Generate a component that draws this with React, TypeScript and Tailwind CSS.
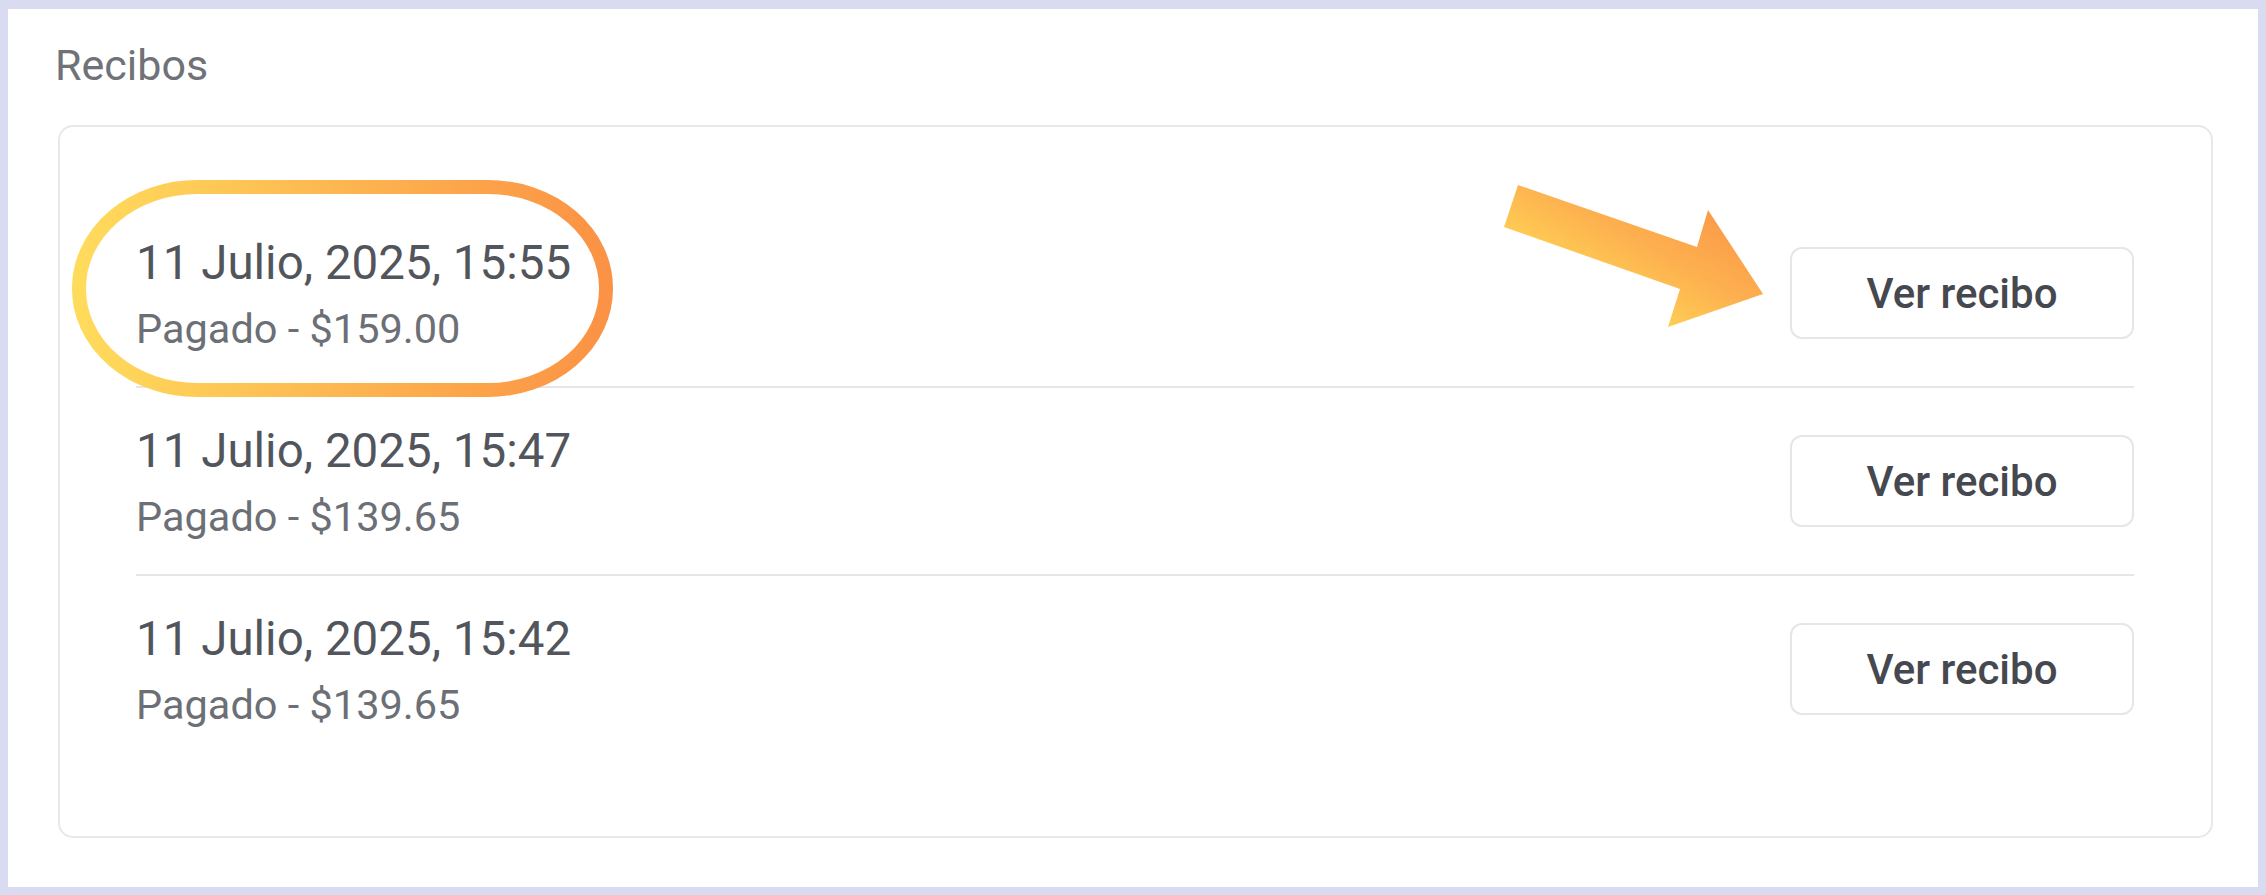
import React from "react";

const rows = [
  { date: "11 Julio, 2025, 15:55", amount: "Pagado - $159.00" },
  { date: "11 Julio, 2025, 15:47", amount: "Pagado - $139.65" },
  { date: "11 Julio, 2025, 15:42", amount: "Pagado - $139.65" },
];

export default function App() {
  return (
    <div
      className="relative w-[2266px] h-[895px] bg-[#d9dcf0] pt-[9px] px-[8px] pb-[8px]"
      style={{ fontFamily: "Roboto, 'Noto Sans', sans-serif" }}
    >
      <div className="h-full bg-white pl-[50px] pr-[45px] pt-[31px]">
        <div className="ml-[-3px] text-[43px] leading-[50px] text-[#707278]">Recibos</div>
        <div className="mt-[35px] border-2 border-[#e8e8eb] rounded-[15px] pt-[73px] pb-[74px] pl-[76px] pr-[77px]">
          {rows.map((r, i) => (
            <div
              key={i}
              className={
                i === 0
                  ? "h-[186px] flex items-center justify-between"
                  : "h-[188px] flex items-center justify-between border-t-2 border-[#e6e6e9]"
              }
            >
              <div className="flex flex-col pt-[4px]">
                <div className="text-[47.5px] leading-[52px] text-[#52555c]">
                  {r.date}
                </div>
                <div className="mt-[16px] text-[41.5px] leading-[48px] text-[#6c6f76]">
                  {r.amount}
                </div>
              </div>
              <button className="w-[344px] h-[92px] border-2 border-[#e6e6ea] rounded-[12px] bg-white text-[42px] font-medium text-[#46484f] flex items-center justify-center">
                Ver recibo
              </button>
            </div>
          ))}
        </div>
      </div>

      <svg
        className="absolute left-[60px] top-[170px]"
        width="570"
        height="240"
        viewBox="0 0 570 240"
      >
        <defs>
          <linearGradient id="ellG" gradientUnits="userSpaceOnUse" x1="19" y1="0" x2="546" y2="0">
            <stop offset="0" stopColor="#ffdb5c" />
            <stop offset="0.5" stopColor="#fdb650" />
            <stop offset="1" stopColor="#fb9245" />
          </linearGradient>
        </defs>
        <rect
          x="19"
          y="17"
          width="527"
          height="203"
          rx="118"
          ry="101"
          fill="none"
          stroke="url(#ellG)"
          strokeWidth="14"
        />
      </svg>

      <svg
        className="absolute left-[1490px] top-[175px]"
        width="290"
        height="170"
        viewBox="0 0 290 170"
      >
        <defs>
          <linearGradient id="arrG" gradientUnits="userSpaceOnUse" x1="150" y1="160" x2="230" y2="20">
            <stop offset="0" stopColor="#ffd855" />
            <stop offset="0.5" stopColor="#fdb04f" />
            <stop offset="1" stopColor="#fb9447" />
          </linearGradient>
        </defs>
        <polygon
          points="28,10 207,72 218,35 273,119 178,152 190,114 14,52"
          fill="url(#arrG)"
        />
      </svg>
    </div>
  );
}
